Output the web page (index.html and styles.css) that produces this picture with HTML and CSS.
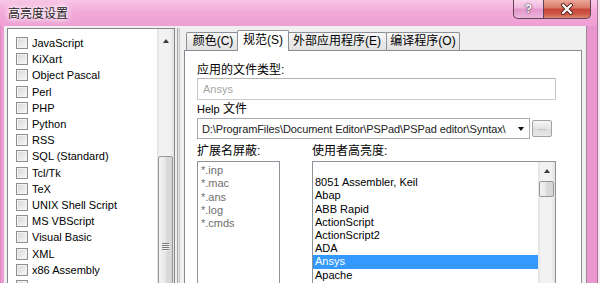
FILE: index.html
```html
<!DOCTYPE html>
<html lang="zh">
<head>
  <meta charset="UTF-8" />
  <title>高亮度设置</title>
  <link rel="stylesheet" href="styles.css">
</head>
<body>
  <div class="window">
    <div class="titlebar">
      <span class="title">高亮度设置</span>
      <div class="caption-buttons">
        <div class="cap cap-help">?</div>
        <div class="cap cap-close">
          <svg width="14" height="12" viewBox="0 0 14 12">
            <path d="M3 2 L11 10 M11 2 L3 10" stroke="#5a2420" stroke-width="4" stroke-linecap="round"/>
            <path d="M3 2 L11 10 M11 2 L3 10" stroke="#fff" stroke-width="2.2" stroke-linecap="round"/>
          </svg>
        </div>
      </div>
    </div>

    <div class="client">
      <!-- languages -->
      <div class="lang-list">
        <ul class="lang-items">
          <li><span class="check"></span>JavaScript</li>
          <li><span class="check"></span>KiXart</li>
          <li><span class="check"></span>Object Pascal</li>
          <li><span class="check"></span>Perl</li>
          <li><span class="check"></span>PHP</li>
          <li><span class="check"></span>Python</li>
          <li><span class="check"></span>RSS</li>
          <li><span class="check"></span>SQL (Standard)</li>
          <li><span class="check"></span>Tcl/Tk</li>
          <li><span class="check"></span>TeX</li>
          <li><span class="check"></span>UNIX Shell Script</li>
          <li><span class="check"></span>MS VBScript</li>
          <li><span class="check"></span>Visual Basic</li>
          <li><span class="check"></span>XML</li>
          <li><span class="check"></span>x86 Assembly</li>
          <li><span class="check"></span></li>
        </ul>
        <div class="vscroll lang-scroll">
          <div class="scroll-arrow"><span class="arrow-up"></span></div>
          <div class="thumb"><span class="grip"></span></div>
        </div>
      </div>

      <div class="splitter"></div>

      <!-- tabs -->
      <div class="tabs">
        <div class="tab-strip">
          <span class="tab tab-color">颜色(C)</span>
          <span class="tab tab-spec active">规范(S)</span>
          <span class="tab tab-ext">外部应用程序(E)</span>
          <span class="tab tab-comp">编译程序(O)</span>
        </div>
        <div class="tab-page">
          <div class="label label-type">应用的文件类型:</div>
          <div class="textbox">Ansys</div>

          <div class="label label-help"><span class="latin">Help</span> 文件</div>
          <div class="combo-row">
            <div class="combo">
              <span class="combo-text">D:\ProgramFiles\Document Editor\PSPad\PSPad editor\Syntax\</span>
              <span class="combo-arrow"></span>
            </div>
            <div class="browse">...</div>
          </div>

          <div class="label-row">
            <span class="label col-ext">扩展名屏蔽:</span>
            <span class="label">使用者高亮度:</span>
          </div>
          <div class="lists-row">
            <ul class="ext-list">
              <li>*.inp</li>
              <li>*.mac</li>
              <li>*.ans</li>
              <li>*.log</li>
              <li>*.cmds</li>
            </ul>
            <div class="user-list">
              <ul class="user-items">
                <li>&nbsp;</li>
                <li>8051 Assembler, Keil</li>
                <li>Abap</li>
                <li>ABB Rapid</li>
                <li>ActionScript</li>
                <li>ActionScript2</li>
                <li>ADA</li>
                <li class="selected">Ansys</li>
                <li>Apache</li>
              </ul>
              <div class="vscroll">
                <div class="scroll-arrow small"><span class="arrow-up"></span></div>
                <div class="thumb short"></div>
              </div>
            </div>
          </div>
        </div>
      </div>
    </div>
  </div>
</body>
</html>
```

FILE: styles.css
```css
* {
  box-sizing: border-box;
}

body {
  margin: 0;
  width: 600px;
  height: 283px;
  overflow: hidden;
  background: #f4e8f0;
  font-family: "Liberation Sans", "Noto Sans CJK SC", sans-serif;
  font-size: 11px;
  color: #000;
}

ul {
  margin: 0;
  padding: 0;
  list-style: none;
}

.window {
  width: 598px;
  height: 330px;
  background: linear-gradient(90deg, #e184c1, #ec9ed2 2px, #e993cc 50%, #ea96ce);
  border-right: 1px solid #a9759a;
}

/* title bar */
.titlebar {
  height: 26px;
  display: flex;
  justify-content: space-between;
  align-items: flex-start;
  background: linear-gradient(#f8c6e6, #f2aad9 45%, #ee9fd4);
}

.title {
  margin: 7px 0 0 8px;
  font-size: 12px;
  line-height: 14px;
  color: #1c1c1c;
  text-shadow: 0 0 3px #fff, 0 0 6px #fff, 0 0 8px #fff;
}

.caption-buttons {
  display: flex;
  margin-right: 6px;
}

.cap {
  height: 19px;
  border: 1px solid #5e4456;
  border-top: none;
  display: flex;
  align-items: center;
  justify-content: center;
}

.cap-help {
  width: 30px;
  border-right: none;
  border-radius: 0 0 0 5px;
  background: linear-gradient(#f9d6ee, #f0b6de 45%, #e496cb 50%, #ecb4dc);
  color: #fff;
  font-weight: bold;
  font-size: 12px;
  text-shadow: 0 0 2px #4a2a40, 0 0 1px #4a2a40;
}

.cap-close {
  width: 48px;
  border-radius: 0 0 5px 0;
  background: linear-gradient(#eba89a, #d97664 45%, #c6453a 50%, #cd5847 78%, #e08a70);
}

/* client area */
.client {
  display: flex;
  align-items: flex-start;
  height: 304px;
  margin: 0 10px 0 4px;
  padding: 2px 4px 0 3px;
  background: #f0f0f0;
  border-right: 1px solid #9c8794;
}

.lang-list {
  display: flex;
  width: 169px;
  height: 280px;
  border: 1px solid #828790;
  background: #fff;
}

.lang-items {
  flex: 1;
  padding: 6px 0 0 8px;
}

.lang-items li {
  display: flex;
  align-items: center;
  gap: 2px;
  height: 16.2px;
  white-space: nowrap;
}

.check {
  width: 12px;
  height: 12px;
  margin-right: 2px;
  border: 1px solid #8f8f8f;
  background: linear-gradient(135deg, #d8d8d8, #f7f7f7);
  box-shadow: inset 0 0 0 1px #f2f2f2;
}

/* scrollbars */
.vscroll {
  width: 17px;
  display: flex;
  flex-direction: column;
  align-items: center;
  background: linear-gradient(90deg, #e2e2e2, #f2f2f2 3px, #f2f2f2 13px, #e2e2e2);
}

.scroll-arrow {
  width: 17px;
  height: 17px;
  display: flex;
  align-items: center;
  justify-content: center;
}

.lang-scroll .scroll-arrow {
  margin-top: 7px;
}

.arrow-up {
  width: 0;
  height: 0;
  border-left: 3.5px solid transparent;
  border-right: 3.5px solid transparent;
  border-bottom: 4px solid #3a3a3a;
}

.thumb {
  width: 15px;
  height: 190px;
  margin-top: 110px;
  border: 1px solid #979797;
  border-radius: 2px;
  background: linear-gradient(90deg, #f3f3f3, #e6e6e6 50%, #dadada 50%, #d6d6d6);
  display: flex;
  justify-content: center;
  padding-top: 86px;
}

.thumb.short {
  height: 16px;
  margin-top: 2px;
  padding: 0;
}

.grip {
  width: 7px;
  height: 8px;
  background: repeating-linear-gradient(#777 0 1px, #f4f4f4 1px 2px);
}

.splitter {
  align-self: stretch;
  width: 3px;
  margin: 0 4px 0 2px;
  border-left: 1px solid #a6a6a6;
  border-right: 1px solid #c8c8c8;
  background: #e4e4e4;
}

/* tabs */
.tabs {
  width: 398px;
  margin-top: 2px;
}

.tab-strip {
  display: flex;
  align-items: flex-end;
  height: 20px;
  padding-left: 2px;
}

.tab {
  height: 18px;
  margin-left: -1px;
  border: 1px solid #8d9097;
  border-bottom: none;
  border-radius: 2px 2px 0 0;
  background: linear-gradient(#f7f7f7, #eaeaea 50%, #e2e2e2);
  font-size: 12px;
  line-height: 17px;
  text-align: center;
  white-space: nowrap;
}

.tab-color {
  width: 54px;
  margin-left: 0;
}

.tab-spec {
  width: 52px;
  margin-left: -3px;
}

.tab-ext {
  width: 100px;
  margin-left: -2px;
}

.tab-comp {
  width: 74px;
}

.tab.active {
  position: relative;
  z-index: 1;
  height: 21px;
  margin-bottom: -1px;
  line-height: 19px;
  background: #fff;
}

.tab-page {
  height: 260px;
  padding: 12px 25px 0 12px;
  border: 1px solid #898c95;
  background: #fff;
}

.label {
  font-size: 12px;
  line-height: 15px;
  height: 15px;
  white-space: nowrap;
}

.latin {
  font-size: 11px;
}

.textbox {
  height: 22px;
  padding-left: 5px;
  border: 1px solid #c9c9c9;
  border-top-color: #b5b5b5;
  line-height: 20px;
  color: #a5a5a5;
}

.label-help {
  margin-top: 1px;
  height: 17px;
  line-height: 16px;
}

.combo-row {
  display: flex;
  align-items: center;
  height: 21px;
}

.combo {
  display: flex;
  align-items: center;
  width: 333px;
  height: 21px;
  border: 1px solid #a7adb6;
  background: #fff;
}

.combo-text {
  flex: 1;
  padding-left: 4px;
  overflow: hidden;
  white-space: nowrap;
  color: #222;
  letter-spacing: -0.1px;
}

.combo-arrow {
  width: 0;
  height: 0;
  margin: 0 5px 0 4px;
  border-left: 3.5px solid transparent;
  border-right: 3.5px solid transparent;
  border-top: 4px solid #111;
}

.browse {
  width: 20px;
  height: 17px;
  margin-left: 2px;
  border: 1px solid #a3a3a3;
  border-radius: 2px;
  background: linear-gradient(#f6f6f6, #e4e4e4 50%, #dadada 50%, #e8e8e8);
  color: #9a9a9a;
  font-size: 9px;
  line-height: 13px;
  text-align: center;
}

.label-row {
  display: flex;
  margin-top: 4px;
  height: 16px;
}

.label-row .label {
  line-height: 16px;
  height: 16px;
}

.col-ext {
  width: 115px;
}

.lists-row {
  display: flex;
  margin-top: 2px;
}

.ext-list {
  width: 83px;
  height: 140px;
  margin-right: 32px;
  padding: 2px 0 0 3px;
  border: 1px solid #8e939a;
  color: #6e6e6e;
}

.ext-list li {
  line-height: 13.3px;
}

.user-list {
  display: flex;
  width: 244px;
  height: 140px;
  border: 1px solid #8e939a;
  background: #fff;
}

.user-items {
  flex: 1;
  padding-top: 1px;
}

.user-items li {
  padding-left: 2px;
  line-height: 13.2px;
  white-space: nowrap;
}

.user-items li.selected {
  background: #3399ff;
  color: #fff;
}
```
